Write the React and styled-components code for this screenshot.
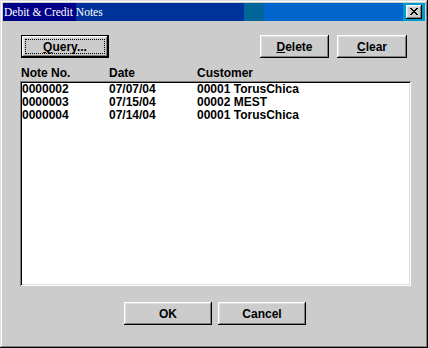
import React from "react";
import styled, { createGlobalStyle } from "styled-components";

const Global = createGlobalStyle`
  html, body { margin: 0; padding: 0; background: #cccccc; }
  body { font-family: "Liberation Sans", Arial, sans-serif; }
  * { box-sizing: border-box; }
`;

const Window = styled.div`
  width: 428px;
  height: 348px;
  padding: 3px;
  background: #cccccc;
  box-shadow: inset -1px -1px #000, inset 1px 1px #dfdfdf,
    inset -2px -2px #808080, inset 2px 2px #fff;
  display: flex;
  flex-direction: column;
`;

const TitleBar = styled.div`
  height: 18px;
  display: flex;
  align-items: center;
  justify-content: space-between;
  padding: 0 3px 0 1px;
  background: linear-gradient(
    to right,
    #000088 0px, #000088 73px,
    #003399 73px, #003399 241px,
    #006699 241px, #006699 261px,
    #0066cc 261px, #0066cc 400px,
    #0099cc 400px, #0099cc 100%
  );
`;

const Title = styled.span`
  font-family: "Liberation Serif", "Times New Roman", serif;
  font-size: 11.5px;
  color: #fff;
  line-height: 18px;
  white-space: nowrap;
`;

const CloseBtn = styled.div`
  width: 16px;
  height: 14px;
  background: #cccccc;
  box-shadow: inset -1px -1px #000, inset 1px 1px #fff,
    inset -2px -2px #808080, inset 2px 2px #dfdfdf;
  display: flex;
  align-items: center;
  justify-content: center;
  padding: 0 1px 1px 0;
  svg { display: block; }
`;

const Body = styled.div`
  flex: 1;
  padding: 14px 17px 0;
  display: flex;
  flex-direction: column;
`;

const Toolbar = styled.div`
  display: flex;
  padding: 0 1px;
`;

const Group = styled.div`
  margin-left: auto;
  display: flex;
  gap: 8px;
`;

const Button = styled.button`
  position: relative;
  width: ${(p) => p.$w}px;
  height: 23px;
  padding: 0;
  border: none;
  background: #cccccc;
  font-family: "Liberation Sans", Arial, sans-serif;
  font-weight: bold;
  font-size: 12px;
  color: #000;
  box-shadow: ${(p) =>
    p.$default
      ? "inset 0 0 0 1px #000, inset -2px -2px #000, inset 2px 2px #fff, inset -3px -3px #808080, inset 3px 3px #dfdfdf"
      : "inset -1px -1px #000, inset 1px 1px #fff, inset -2px -2px #808080, inset 2px 2px #dfdfdf"};
  u { text-decoration-thickness: 1px; text-underline-offset: 1px; }
  ${(p) =>
    p.$default &&
    `&::after {
      content: "";
      position: absolute;
      inset: 4px;
      border: 1px dotted #000;
    }`}
`;

const HeaderRow = styled.div`
  margin-top: 9px;
  margin-bottom: 1px;
  padding-left: 1px;
  display: grid;
  grid-template-columns: 88px 88px auto;
  font-weight: bold;
  font-size: 12px;
  line-height: 13px;
  color: #000;
`;

const ListBox = styled.div`
  width: 391px;
  height: 205px;
  background: #fff;
  padding: 2px;
  box-shadow: inset 1px 1px #808080, inset -1px -1px #fff,
    inset 2px 2px #000, inset -2px -2px #dfdfdf;
`;

const Row = styled.div`
  display: grid;
  grid-template-columns: 87px 88px auto;
  font-weight: bold;
  font-size: 12px;
  line-height: 13px;
  color: #000;
  white-space: nowrap;
`;

const Footer = styled.div`
  margin-top: 16px;
  padding-left: 2px;
  display: flex;
  justify-content: center;
  gap: 6px;
`;

const rows = [
  ["0000002", "07/07/04", "00001 TorusChica"],
  ["0000003", "07/15/04", "00002 MEST"],
  ["0000004", "07/14/04", "00001 TorusChica"],
];

const xPixels = [
  [0, 0, 2], [6, 0, 2],
  [1, 1, 2], [5, 1, 2],
  [2, 2, 4],
  [3, 3, 2],
  [2, 4, 4],
  [1, 5, 2], [5, 5, 2],
  [0, 6, 2], [6, 6, 2],
];

export default function App() {
  return (
    <>
      <Global />
      <Window>
        <TitleBar>
          <Title>Debit &amp; Credit Notes</Title>
          <CloseBtn>
            <svg width="8" height="7" viewBox="0 0 8 7" shapeRendering="crispEdges">
              {xPixels.map(([x, y, w], i) => (
                <rect key={i} x={x} y={y} width={w} height={1} fill="#000" />
              ))}
            </svg>
          </CloseBtn>
        </TitleBar>
        <Body>
          <Toolbar>
            <Button $w={88} $default>
              <u>Q</u>uery...
            </Button>
            <Group>
              <Button $w={69}>
                <u>D</u>elete
              </Button>
              <Button $w={70}>
                <u>C</u>lear
              </Button>
            </Group>
          </Toolbar>
          <HeaderRow>
            <span>Note No.</span>
            <span>Date</span>
            <span>Customer</span>
          </HeaderRow>
          <ListBox>
            {rows.map((r) => (
              <Row key={r[0]}>
                <span>{r[0]}</span>
                <span>{r[1]}</span>
                <span>{r[2]}</span>
              </Row>
            ))}
          </ListBox>
          <Footer>
            <Button $w={88}>OK</Button>
            <Button $w={88}>Cancel</Button>
          </Footer>
        </Body>
      </Window>
    </>
  );
}
